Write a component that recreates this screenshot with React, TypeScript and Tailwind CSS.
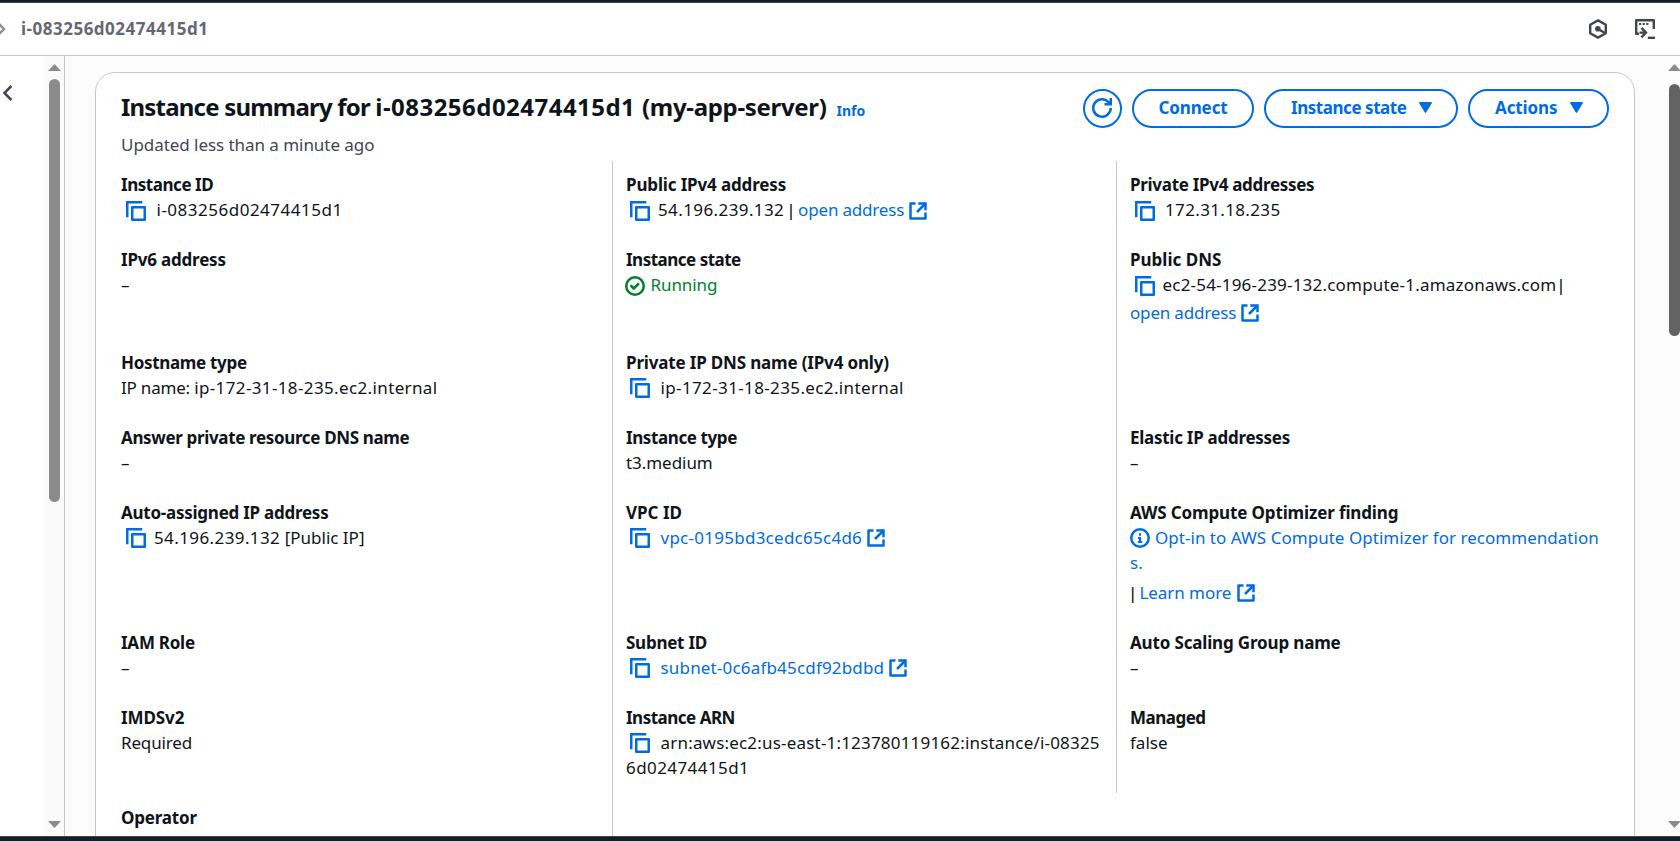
import type { ReactNode } from "react";

function CopyIcon({ className = "" }: { className?: string }) {
  return (
    <svg viewBox="0 0 16 16" fill="none" stroke="#006ce0" strokeWidth="2" strokeLinejoin="round" className={`h-5 w-5 shrink-0 ${className}`}>
      <path d="M15 5H5v10h10V5Z" />
      <path d="M13 1H1v12" strokeLinejoin="miter" />
    </svg>
  );
}

function ExternalIcon({ className = "" }: { className?: string }) {
  return (
    <svg viewBox="0 0 16 16" fill="none" stroke="#006ce0" strokeWidth="2" className={`ml-[3.5px] h-5 w-5 shrink-0 ${className}`}>
      <path d="M6 2H2v12h12V9.2" strokeLinejoin="round" />
      <path d="M8.2 2H14v5.4" />
      <path d="M14 2 7.2 8.8" />
    </svg>
  );
}

function RefreshIcon() {
  return (
    <svg viewBox="0 0 16 16" fill="none" stroke="#006ce0" strokeWidth="2" className="mr-px mb-0.5 h-5 w-5">
      <path d="M15 8a7 7 0 1 1-1.7-4.6L15 5" strokeLinejoin="round" />
      <path d="M10 5h5V0" />
    </svg>
  );
}

function CheckCircle() {
  return (
    <svg viewBox="0 0 16 16" fill="none" stroke="#00802f" strokeWidth="2" className="mt-1 h-5 w-5 shrink-0">
      <circle cx="8" cy="8" r="7" />
      <path d="m5 8 2 2 3.6-3.6" strokeLinecap="round" strokeLinejoin="round" />
    </svg>
  );
}

function InfoCircle() {
  return (
    <svg viewBox="0 0 16 16" fill="none" stroke="#006ce0" strokeWidth="2" className="mt-[3px] h-5 w-5 shrink-0">
      <circle cx="8" cy="8" r="7" />
      <path d="M8 11V8H6.4M6.2 11.2h3.6M8 6.2v-2" strokeWidth="1.6" />
    </svg>
  );
}

function HexIcon() {
  return (
    <svg viewBox="0 0 20 20" fill="none" stroke="#424650" strokeWidth="2.4" className="h-5 w-5">
      <path d="m10 1.4 7.8 4.4v8.4L10 18.6l-7.8-4.4V5.8Z" strokeLinejoin="round" />
      <circle cx="9.8" cy="9.8" r="2.8" fill="#424650" stroke="none" />
      <path d="m10 10 7 4" />
    </svg>
  );
}

function ShellIcon() {
  return (
    <svg viewBox="0 0 20 20" fill="none" stroke="#424650" strokeWidth="2.4" className="h-5 w-5">
      <path d="M4 14.8H1.2V1.2h17.6V10" strokeLinejoin="round" />
      <path d="M4 5h2.2M7.6 5h2.2M11.2 5h2.2" strokeWidth="2" />
      <path d="M4.5 13.6h6.2M6.4 8.8l4.6 4.8-4.6 4.8" />
      <path d="M12.8 18.8H20" />
    </svg>
  );
}

function Triangle() {
  return (
    <svg viewBox="0 0 13 11" className="h-[11px] w-[13px] shrink-0">
      <path d="M.8.8h11.4L6.5 10.2Z" fill="#006ce0" stroke="#006ce0" strokeWidth="1.4" strokeLinejoin="round" />
    </svg>
  );
}

function ScrollArrow({ down = false }: { down?: boolean }) {
  return (
    <svg viewBox="0 0 13 7" className="h-[7px] w-[13px] shrink-0">
      <path d={down ? "M0 0h13L6.5 7Z" : "M0 7h13L6.5 0Z"} fill="#8b8b8b" />
    </svg>
  );
}

function Cell({
  label,
  tracking = "",
  divided = false,
  children,
}: {
  label?: string;
  tracking?: string;
  divided?: boolean;
  children?: ReactNode;
}) {
  return (
    <div className={`pt-[11px] ${divided ? "border-l border-[#c6c6cd] pl-[13px]" : ""}`}>
      {label && <div className={`font-bold ${tracking}`}>{label}</div>}
      {children}
    </div>
  );
}

function Line({ children, className = "" }: { children: ReactNode; className?: string }) {
  return <div className={`flex h-[25px] items-start ${className}`}>{children}</div>;
}

const button = "flex h-[39px] items-center rounded-full border-2 border-[#006ce0] pb-0.5 font-bold text-[#006ce0]";

export default function App() {
  return (
    <div className="flex h-[841px] w-[1680px] flex-col overflow-hidden bg-white font-['Noto_Sans',sans-serif] text-[17px] leading-[25px] whitespace-nowrap text-[#0f141a]">
      <div className="h-[3px] shrink-0 border-b border-[#424650] bg-[#161d26]" />
      <header className="flex h-[53px] shrink-0 items-center justify-between border-b border-[#c6c6cd] pr-[25px]">
        <div className="flex items-center">
          <svg viewBox="0 0 6 12" fill="none" stroke="#8c8c94" strokeWidth="2.4" className="h-3 w-1.5">
            <path d="M-1 1 4 6l-5 5" />
          </svg>
          <span className="ml-[15px] pb-px font-bold tracking-[0.5px] text-[#656871]">i-083256d02474415d1</span>
        </div>
        <div className="flex items-center gap-[27px]">
          <HexIcon />
          <ShellIcon />
        </div>
      </header>

      <div className="flex min-h-0 flex-1">
        <aside className="flex w-[65px] shrink-0 border-r border-[#c6c6cd]">
          <div className="w-[45px] pt-[29px] pl-[2px]">
            <svg viewBox="0 0 10 16" fill="none" stroke="#424650" strokeWidth="2.5" className="h-4 w-2.5">
              <path d="M9.4 1 2.4 8l7 7" />
            </svg>
          </div>
          <div className="flex w-[19px] flex-col items-center justify-between bg-[#fafafa] py-2">
            <div className="flex flex-col items-center gap-2">
              <ScrollArrow />
              <div className="h-[423px] w-[11px] rounded-full bg-[#8b8b8b]" />
            </div>
            <ScrollArrow down />
          </div>
        </aside>

        <main className="flex min-w-0 flex-1 justify-between overflow-hidden bg-[#fcfcfd] pl-[30px]">
          <section className="mt-4 h-[800px] w-[1540px] shrink-0 rounded-t-[20px] border border-[#c6c6cd] bg-white px-[25px] pt-4">
            <div className="flex h-[39px] items-start justify-between">
              <div className="mt-[3px] flex items-baseline gap-[10px]">
                <h1 className="text-[24px] leading-[30px] font-bold">
                  <span className="tracking-[-0.8px]">Instance summary for </span>
                  <span className="tracking-[0.47px]">i-083256d02474415d1 </span>
                  <span className="tracking-[-0.32px]">(my-app-server)</span>
                </h1>
                <span className="text-[14px] leading-5 font-bold text-[#006ce0]">Info</span>
              </div>
              <div className="flex gap-[10px]">
                <button className="flex h-[39px] w-[39px] items-center justify-center rounded-full border-2 border-[#006ce0]">
                  <RefreshIcon />
                </button>
                <button className={`${button} w-[122px] justify-center tracking-[-0.1px]`}>Connect</button>
                <button className={`${button} w-[194px] justify-between pr-6 pl-[25px] tracking-[-0.45px]`}>
                  Instance state
                  <Triangle />
                </button>
                <button className={`${button} w-[141px] justify-between pr-6 pl-[25px] tracking-[-0.1px]`}>
                  Actions
                  <Triangle />
                </button>
              </div>
            </div>
            <p className="mt-1 tracking-[-0.05px] text-[#424650]">Updated less than a minute ago</p>

            <div className="mt-1 grid grid-cols-[491px_504px_493px] grid-rows-[75px_103px_75px_75px_130px_75px_99px_60px]">
              <Cell label="Instance ID" tracking="tracking-[-0.45px]">
                <Line className="pl-[5px]">
                  <CopyIcon className="mt-1" />
                  <span className="ml-[10.5px] tracking-[0.5px]">i-083256d02474415d1</span>
                </Line>
              </Cell>
              <Cell divided label="Public IPv4 address" tracking="tracking-[-0.15px]">
                <Line className="pl-1">
                  <CopyIcon className="mt-1" />
                  <span className="ml-2 tracking-[0.4px]">54.196.239.132</span>
                  <span className="ml-0.5 font-medium">|</span>
                  <a className="ml-[2.5px] tracking-[-0.18px] text-[#006ce0]">open address</a>
                  <ExternalIcon className="mt-1" />
                </Line>
              </Cell>
              <Cell divided label="Private IPv4 addresses" tracking="tracking-[-0.3px]">
                <Line className="pl-[5px]">
                  <CopyIcon className="mt-1" />
                  <span className="ml-[10px] tracking-[0.35px]">172.31.18.235</span>
                </Line>
              </Cell>

              <Cell label="IPv6 address" tracking="tracking-[-0.2px]">–</Cell>
              <Cell divided label="Instance state" tracking="tracking-[-0.5px]">
                <Line className="-ml-px text-[#00802f]">
                  <CheckCircle />
                  <span className="ml-[5.5px] tracking-[-0.1px]">Running</span>
                </Line>
              </Cell>
              <Cell divided label="Public DNS">
                <Line className="pl-[5px]">
                  <CopyIcon className="mt-1" />
                  <span className="ml-[7.5px] tracking-[0.2px]">ec2-54-196-239-132.compute-1.amazonaws.com</span>
                  <span className="font-medium">|</span>
                </Line>
                <Line className="mt-[3px]">
                  <a className="tracking-[-0.18px] text-[#006ce0]">open address</a>
                  <ExternalIcon className="mt-[3px]" />
                </Line>
              </Cell>

              <Cell label="Hostname type" tracking="tracking-[-0.32px]">
                <Line>
                  <span className="tracking-[-0.2px] whitespace-pre">IP name: </span>
                  <span className="tracking-[0.37px]">ip-172-31-18-235.ec2.internal</span>
                </Line>
              </Cell>
              <Cell divided label="Private IP DNS name (IPv4 only)" tracking="tracking-[-0.17px]">
                <Line className="pl-1">
                  <CopyIcon className="mt-[3px]" />
                  <span className="ml-[10.5px] tracking-[0.37px]">ip-172-31-18-235.ec2.internal</span>
                </Line>
              </Cell>
              <Cell divided />

              <Cell label="Answer private resource DNS name" tracking="tracking-[-0.35px]">–</Cell>
              <Cell divided label="Instance type" tracking="tracking-[-0.4px]">
                <div className="tracking-[-0.05px]">t3.medium</div>
              </Cell>
              <Cell divided label="Elastic IP addresses" tracking="tracking-[-0.27px]">–</Cell>

              <Cell label="Auto-assigned IP address" tracking="tracking-[-0.25px]">
                <Line className="pl-[5px]">
                  <CopyIcon className="mt-[3px]" />
                  <span className="ml-2 tracking-[0.4px]">54.196.239.132</span>
                  <span className="whitespace-pre"> [Public IP]</span>
                </Line>
              </Cell>
              <Cell divided label="VPC ID">
                <Line className="pl-1 text-[#006ce0]">
                  <CopyIcon className="mt-[3px]" />
                  <a className="ml-[10.5px] tracking-[0.26px]">vpc-0195bd3cedc65c4d6</a>
                  <ExternalIcon className="mt-[3px]" />
                </Line>
              </Cell>
              <Cell divided label="AWS Compute Optimizer finding" tracking="tracking-[-0.14px]">
                <Line className="text-[#006ce0]">
                  <InfoCircle />
                  <a className="ml-[5px] tracking-[0.03px]">Opt-in to AWS Compute Optimizer for recommendation</a>
                </Line>
                <Line className="text-[#006ce0]">s.</Line>
                <Line className="mt-[5px] -ml-0.5">
                  <span className="font-medium">|</span>
                  <a className="ml-0.5 tracking-[-0.05px] text-[#006ce0]">Learn more</a>
                  <ExternalIcon className="mt-[3px] translate-x-px" />
                </Line>
              </Cell>

              <Cell label="IAM Role" tracking="tracking-[-0.25px]">–</Cell>
              <Cell divided label="Subnet ID" tracking="tracking-[-0.25px]">
                <Line className="pl-1 text-[#006ce0]">
                  <CopyIcon className="mt-[3px]" />
                  <a className="ml-[10.5px] tracking-[0.18px]">subnet-0c6afb45cdf92bdbd</a>
                  <ExternalIcon className="mt-[3px]" />
                </Line>
              </Cell>
              <Cell divided label="Auto Scaling Group name" tracking="tracking-[-0.16px]">–</Cell>

              <Cell label="IMDSv2" tracking="tracking-[-0.1px]">
                <div className="tracking-[-0.15px]">Required</div>
              </Cell>
              <Cell divided label="Instance ARN" tracking="tracking-[-0.5px]">
                <Line className="pl-1">
                  <CopyIcon className="mt-[3px]" />
                  <span className="ml-[10.5px] tracking-[0.19px]">arn:aws:ec2:us-east-1:123780119162:instance/i-08325</span>
                </Line>
                <div className="tracking-[0.42px]">6d02474415d1</div>
              </Cell>
              <Cell divided label="Managed" tracking="tracking-[-0.5px]">
                <div>false</div>
              </Cell>

              <div className="pt-3 font-bold tracking-[-0.2px]">Operator</div>
              <Cell divided />
            </div>
          </section>

          <div className="flex w-3 shrink-0 flex-col justify-between overflow-hidden py-2">
            <div>
              <ScrollArrow />
              <div className="mt-[13px] ml-px h-[252px] w-[11px] rounded-full bg-[#636363]" />
            </div>
            <ScrollArrow down />
          </div>
        </main>
      </div>
      <div className="h-[5px] shrink-0 border-t border-[#424650] bg-[#161d26]" />
    </div>
  );
}
